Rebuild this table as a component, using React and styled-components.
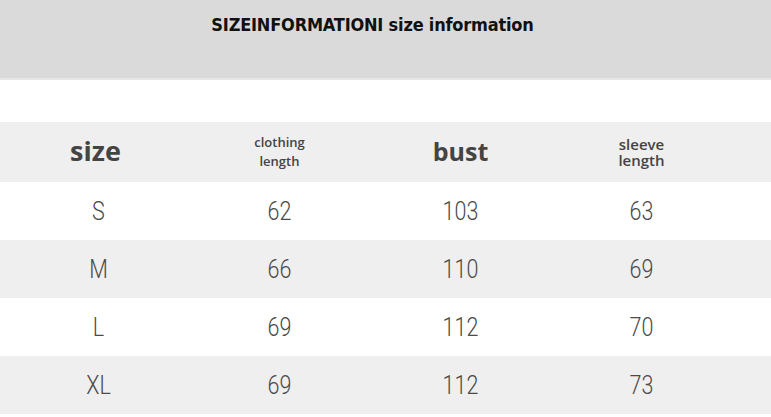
import React from "react";
import styled, { createGlobalStyle } from "styled-components";

const Global = createGlobalStyle`
  html, body { margin: 0; padding: 0; background: #ffffff; }
  body { width: 771px; height: 417px; overflow: hidden; }
`;

const Page = styled.div`
  width: 771px;
  height: 417px;
  display: flex;
  flex-direction: column;
  background: #ffffff;
`;

const Banner = styled.header`
  height: 80px;
  background: #dadada;
  border-bottom: 2px solid #e6e6e6;
  display: flex;
  justify-content: center;
  padding: 13px 26px 0 0;
  box-sizing: border-box;
`;

const Title = styled.h1`
  margin: 0;
  font-family: "DejaVu Sans Condensed", "DejaVu Sans", sans-serif;
  font-stretch: condensed;
  font-weight: bold;
  font-size: 18px;
  line-height: 24px;
  color: #111;
  letter-spacing: -0.2px;
`;

const Spacer = styled.div`
  height: 42px;
`;

const Table = styled.div`
  display: flex;
  flex-direction: column;
`;

const Row = styled.div`
  display: grid;
  grid-template-columns: repeat(4, 181px);
  padding-left: 8px;
  height: ${(p) => p.$h}px;
  background: ${(p) => (p.$shade ? "#efefef" : "#ffffff")};
  align-items: center;
`;

const HeadBig = styled.div`
  text-align: center;
  font-family: "Open Sans", sans-serif;
  font-weight: bold;
  font-size: ${(p) => p.$size}px;
  color: #444;
  margin-left: ${(p) => p.$shift}px;
  margin-bottom: 3px;
`;

const HeadSmall = styled.div`
  text-align: center;
  font-family: "Open Sans", sans-serif;
  font-weight: 600;
  font-size: ${(p) => p.$size}px;
  line-height: ${(p) => p.$lh}px;
  color: #444;
`;

const Cell = styled.div`
  text-align: center;
  font-family: Roboto, sans-serif;
  font-weight: 300;
  font-size: 25px;
  color: #4a4a4a;
  transform: scaleX(0.86);
  padding-top: 1px;
`;

const rows = [
  ["S", "62", "103", "63"],
  ["M", "66", "110", "69"],
  ["L", "69", "112", "70"],
  ["XL", "69", "112", "73"],
];

export default function App() {
  return (
    <Page>
      <Global />
      <Banner>
        <Title>SIZEINFORMATIONI size information</Title>
      </Banner>
      <Spacer />
      <Table>
        <Row $shade $h={60}>
          <HeadBig $size={27} $shift={-6}>size</HeadBig>
          <HeadSmall $size={13} $lh={19}>clothing<br />length</HeadSmall>
          <HeadBig $size={25} $shift={0}>bust</HeadBig>
          <HeadSmall $size={15} $lh={16}>sleeve<br />length</HeadSmall>
        </Row>
        {rows.map((r, i) => (
          <Row key={r[0]} $shade={i % 2 === 1} $h={58}>
            {r.map((c, j) => (
              <Cell key={j}>{c}</Cell>
            ))}
          </Row>
        ))}
      </Table>
    </Page>
  );
}
